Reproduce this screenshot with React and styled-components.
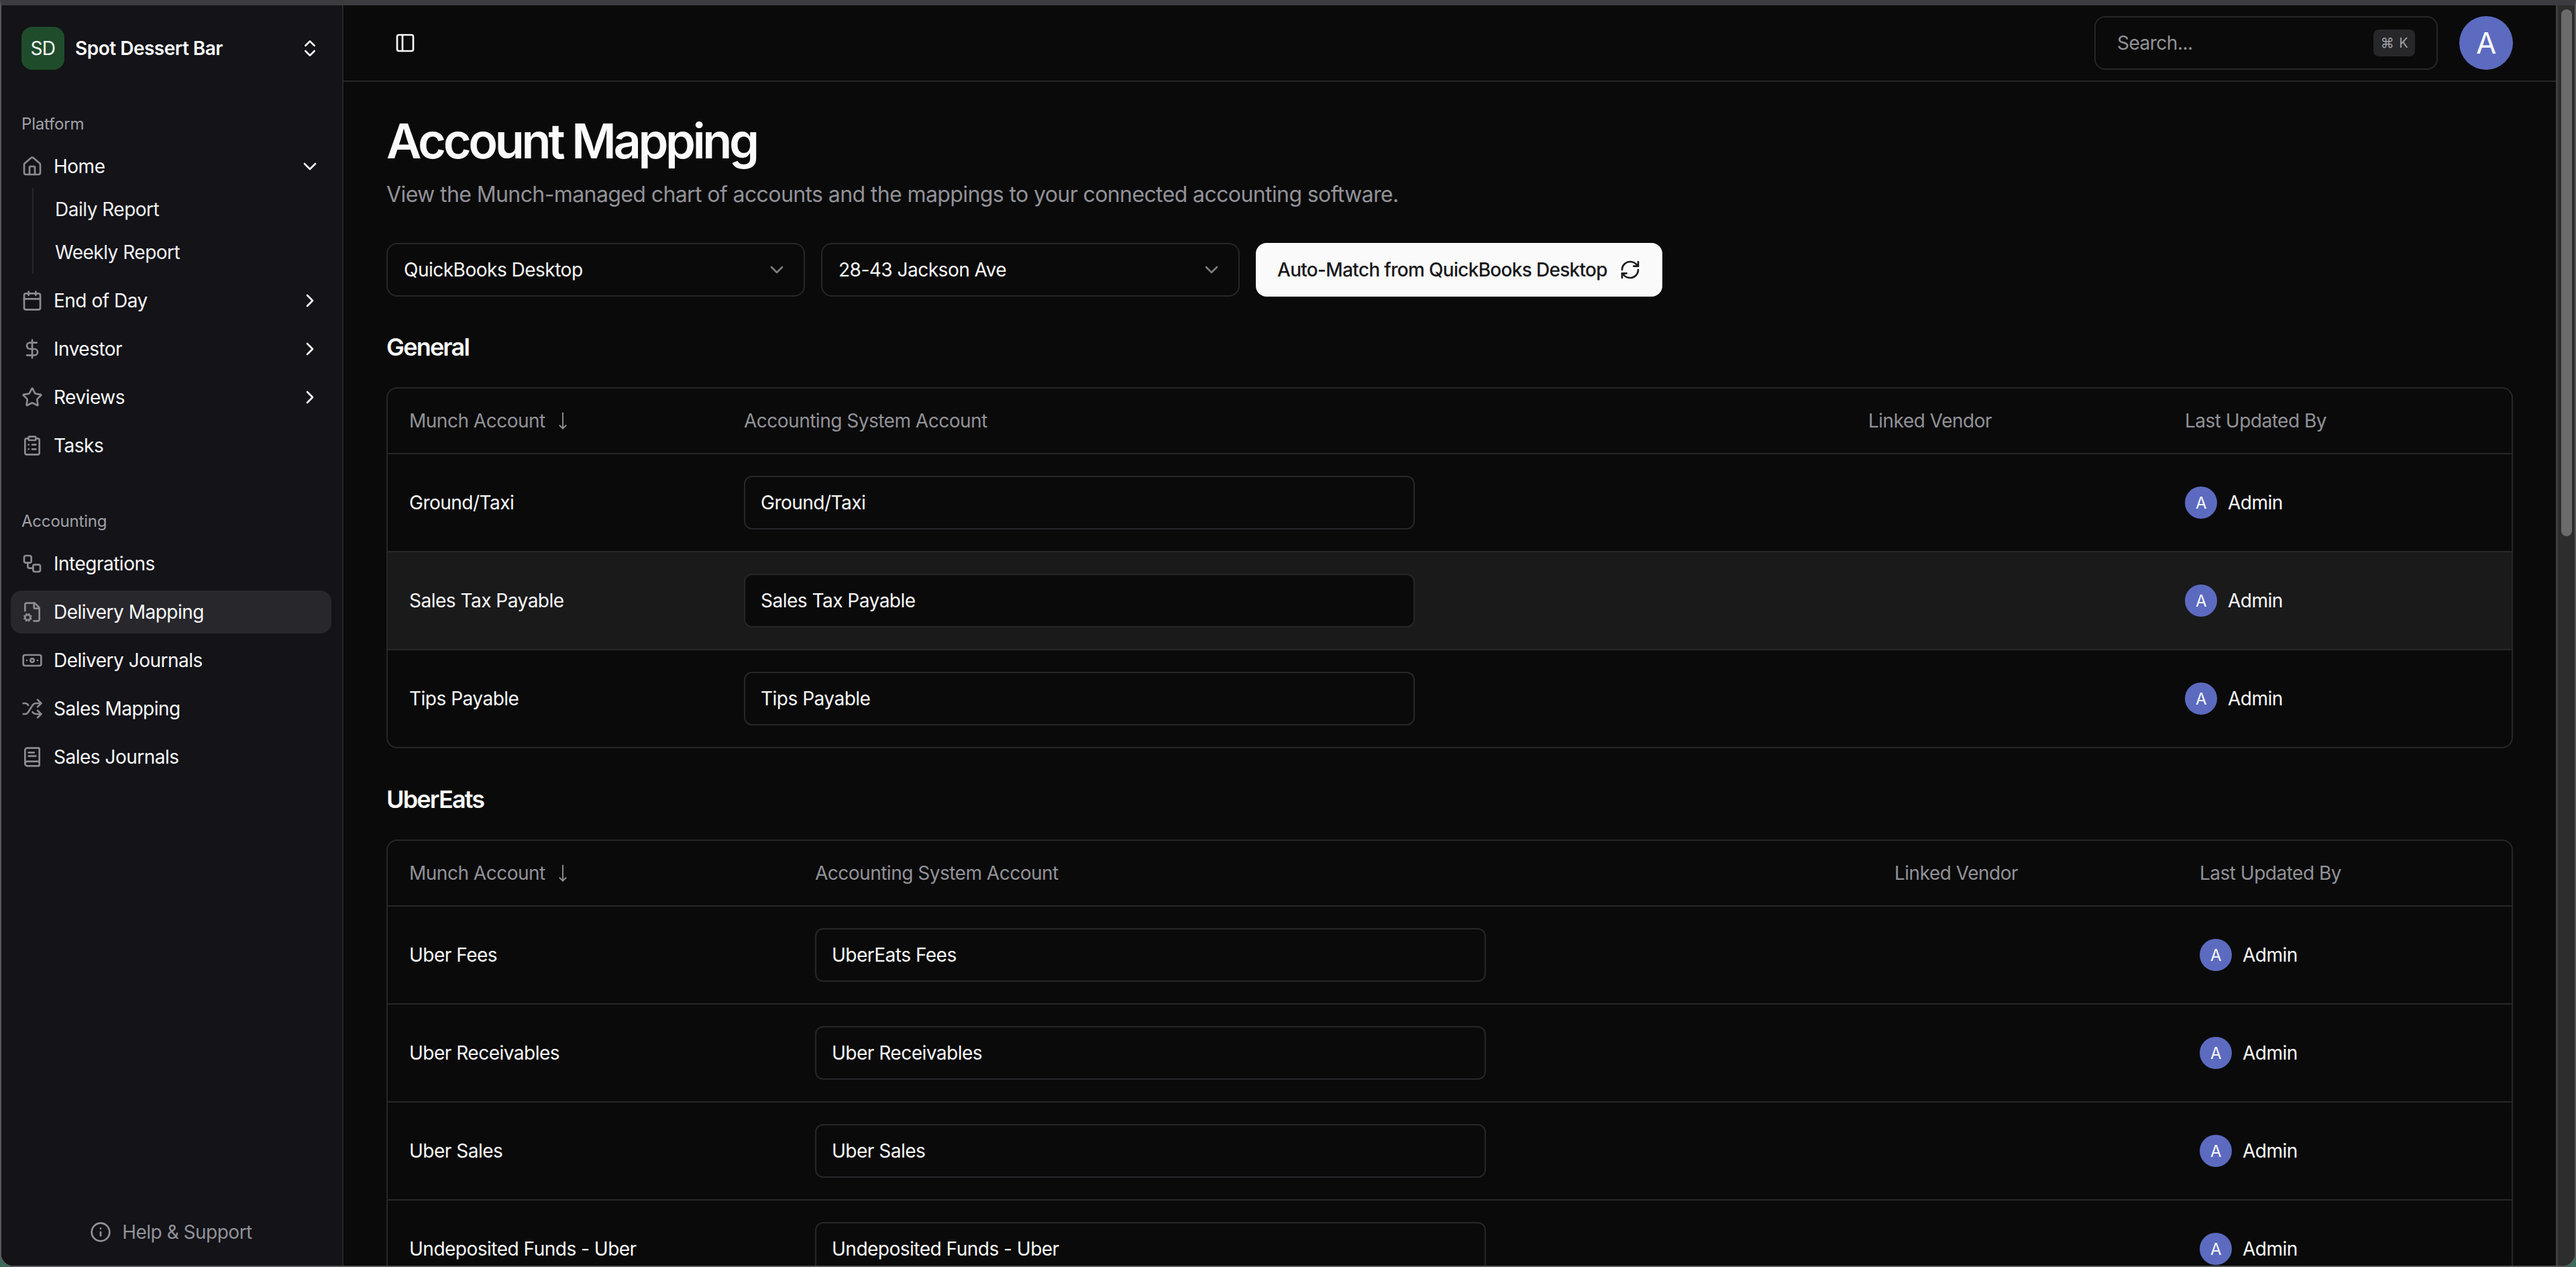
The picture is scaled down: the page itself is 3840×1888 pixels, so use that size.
import React from "react";
import styled, { createGlobalStyle } from "styled-components";
import {
  Banknote,
  BookText,
  Calendar,
  ChevronDown,
  ChevronRight,
  ChevronsUpDown,
  ClipboardList,
  DollarSign,
  FileCog,
  House,
  Info,
  MoveDown,
  PanelLeft,
  RefreshCw,
  Shuffle,
  Star,
  Workflow,
} from "lucide-react";

const GlobalStyle = createGlobalStyle`
  html, body, #root {
    margin: 0;
    height: 100%;
    overflow: hidden;
  }
  body {
    background: #3c6b5a;
    font-family: Inter, "Liberation Sans", sans-serif;
    letter-spacing: -0.5px;
    color: #fafafa;
  }
  * {
    box-sizing: border-box;
  }
`;

const AppWindow = styled.div`
  display: flex;
  height: 1888px;
  background: #0a0a0a;
  border: 2px solid #58585c;
  border-top: 8px solid #3b3b40;
  border-radius: 0 0 20px 20px;
  overflow: hidden;
`;

const Sidebar = styled.aside`
  display: flex;
  flex-direction: column;
  flex: 0 0 510px;
  background: #131318;
  border-right: 2px solid #27272a;
  padding: 0 16px 18px 14px;
`;

const Brand = styled.div`
  display: flex;
  align-items: center;
  height: 64px;
  margin: 32px 0 48px;
  padding: 0 16px;
  gap: 16px;
  font-size: 28px;
  font-weight: 600;
  white-space: nowrap;

  svg {
    margin-left: auto;
  }
`;

const BrandMark = styled.div`
  display: flex;
  align-items: center;
  justify-content: center;
  flex: 0 0 64px;
  height: 64px;
  border-radius: 16px;
  background: #1f4d2b;
  font-weight: 400;
`;

const Group = styled.nav`
  display: flex;
  flex-direction: column;
  gap: 8px;
  margin-bottom: 48px;
`;

const GroupLabel = styled.div`
  display: flex;
  align-items: center;
  height: 64px;
  margin-bottom: -8px;
  padding-left: 16px;
  font-size: 24px;
  letter-spacing: -0.2px;
  color: #a1a1a6;
`;

const NavRow = styled.div`
  display: flex;
  align-items: center;
  gap: 16px;
  height: 64px;
  padding: 0 16px;
  border-radius: 16px;
  font-size: 28px;
  white-space: nowrap;
  background: ${(props) => (props.$active ? "#27272c" : "transparent")};

  > svg:first-child {
    color: #8c8c90;
    flex: none;
  }
  > svg:last-child:not(:first-child) {
    margin-left: auto;
    flex: none;
  }
`;

const SubList = styled.div`
  display: flex;
  flex-direction: column;
  gap: 8px;
  margin-left: 32px;
  padding: 4px 0 4px 32px;
  border-left: 2px solid #27272a;
`;

const SubRow = styled.div`
  display: flex;
  align-items: center;
  height: 56px;
  font-size: 28px;
  color: #f0f0f2;
`;

const HelpLink = styled.div`
  display: flex;
  align-items: center;
  justify-content: center;
  gap: 16px;
  height: 64px;
  margin-top: auto;
  font-size: 28px;
  color: #929298;
`;

const Main = styled.main`
  flex: 1;
  min-width: 0;
  display: flex;
  flex-direction: column;
  overflow: hidden;
`;

const TopBar = styled.header`
  display: flex;
  align-items: center;
  flex: 0 0 114px;
  gap: 32px;
  padding: 0 64px;
  border-bottom: 2px solid #27272a;
`;

const IconButton = styled.div`
  display: flex;
  align-items: center;
  justify-content: center;
  width: 56px;
  height: 56px;
  margin-right: auto;
`;

const SearchBox = styled.div`
  display: flex;
  align-items: center;
  justify-content: space-between;
  width: 512px;
  height: 80px;
  padding: 0 32px;
  border: 2px solid #27272a;
  border-radius: 16px;
  font-size: 28px;
  color: #929298;
`;

const Kbd = styled.kbd`
  display: flex;
  align-items: center;
  justify-content: center;
  gap: 8px;
  width: 62px;
  height: 40px;
  border-radius: 8px;
  background: #27272a;
  font-family: Inter, "DejaVu Sans", sans-serif;
  font-size: 20px;
  color: #a1a1a6;
`;

const TopAvatar = styled.div`
  display: flex;
  align-items: center;
  justify-content: center;
  width: 80px;
  height: 80px;
  border-radius: 50%;
  background: #5c6bc0;
  font-size: 44px;
`;

const Content = styled.div`
  padding: 48px 64px;
`;

const Title = styled.h1`
  margin: 0 0 16px;
  font-size: 72px;
  line-height: 80px;
  font-weight: 600;
  letter-spacing: -4.3px;
`;

const Subtitle = styled.p`
  margin: 0 0 48px;
  font-size: 32px;
  line-height: 48px;
  letter-spacing: -0.6px;
  color: #929298;
`;

const Filters = styled.div`
  display: flex;
  gap: 24px;
  margin-bottom: 47px;
`;

const Select = styled.div`
  display: flex;
  align-items: center;
  justify-content: space-between;
  width: 624px;
  height: 80px;
  padding: 0 24px;
  border: 2px solid #27272a;
  border-radius: 16px;
  font-size: 28px;

  svg {
    color: #7d7d7d;
  }
`;

const PrimaryButton = styled.div`
  display: flex;
  align-items: center;
  gap: 18px;
  height: 80px;
  padding: 0 32px;
  border-radius: 16px;
  background: #fafafa;
  color: #18181b;
  font-size: 28px;
  font-weight: 500;
  letter-spacing: -0.7px;
  white-space: nowrap;
`;

const SectionTitle = styled.h2`
  margin: 0 0 32px;
  font-size: 36px;
  line-height: 56px;
  font-weight: 600;
  letter-spacing: -1.8px;
`;

const Section = styled.section`
  margin-bottom: 48px;
`;

const Table = styled.div`
  border: 2px solid #27272a;
  border-radius: 16px;
  overflow: hidden;
`;

const HeadRow = styled.div`
  display: grid;
  grid-template-columns: ${(props) => props.$cols};
  align-items: center;
  height: 98px;
  border-bottom: 2px solid #27272a;
  font-size: 28px;
  color: #929298;
`;

const HeadCell = styled.div`
  display: flex;
  align-items: center;
  gap: 12px;
  padding: 0 32px;
  white-space: nowrap;
`;

const BodyRow = styled.div`
  display: grid;
  grid-template-columns: ${(props) => props.$cols};
  align-items: center;
  height: 146px;
  border-bottom: 2px solid #27272a;
  font-size: 28px;
  background: ${(props) => (props.$hover ? "#1a1a1b" : "transparent")};

  &:last-child {
    border-bottom: 0;
    height: 144px;
  }
`;

const Cell = styled.div`
  display: flex;
  align-items: center;
  padding: 0 32px;
  white-space: nowrap;
`;

const Field = styled.div`
  display: flex;
  align-items: center;
  flex: 0 0 1000px;
  height: 80px;
  padding: 0 23px;
  border: 2px solid #27272a;
  border-radius: 12px;
  background: #0a0a0a;
`;

const UserChip = styled.div`
  display: flex;
  align-items: center;
  gap: 16px;
`;

const UserAvatar = styled.div`
  display: flex;
  align-items: center;
  justify-content: center;
  width: 48px;
  height: 48px;
  border-radius: 50%;
  background: #5c6bc0;
  font-size: 24px;
`;

const ScrollTrack = styled.div`
  flex: 0 0 28px;
  background: #2d2d2d;
  border-left: 3px solid #404040;
  padding: 6px 0 0 5px;
`;

const ScrollThumb = styled.div`
  width: 16px;
  height: 785px;
  border-radius: 8px;
  background: #6b6b6b;
`;

const generalCols = "499px 1676px 472px 1fr";
const uberCols = "605px 1609px 455px 1fr";

const sections = [
  {
    title: "General",
    cols: generalCols,
    rows: [
      ["Ground/Taxi", "Ground/Taxi"],
      ["Sales Tax Payable", "Sales Tax Payable", true],
      ["Tips Payable", "Tips Payable"],
    ],
  },
  {
    title: "UberEats",
    cols: uberCols,
    rows: [
      ["Uber Fees", "UberEats Fees"],
      ["Uber Receivables", "Uber Receivables"],
      ["Uber Sales", "Uber Sales"],
      ["Undeposited Funds - Uber", "Undeposited Funds - Uber"],
    ],
  },
];

function MappingTable({ title, cols, rows }) {
  return (
    <Section>
      <SectionTitle>{title}</SectionTitle>
      <Table>
        <HeadRow $cols={cols}>
          <HeadCell>
            Munch Account
            <MoveDown size={28} strokeWidth={1.6} />
          </HeadCell>
          <HeadCell>Accounting System Account</HeadCell>
          <HeadCell>Linked Vendor</HeadCell>
          <HeadCell>Last Updated By</HeadCell>
        </HeadRow>
        {rows.map(([name, mapped, hover]) => (
          <BodyRow key={name} $cols={cols} $hover={hover}>
            <Cell>{name}</Cell>
            <Cell>
              <Field>{mapped}</Field>
            </Cell>
            <Cell />
            <Cell>
              <UserChip>
                <UserAvatar>A</UserAvatar>
                Admin
              </UserChip>
            </Cell>
          </BodyRow>
        ))}
      </Table>
    </Section>
  );
}

export default function App() {
  return (
    <>
      <GlobalStyle />
      <AppWindow>
        <Sidebar>
          <Brand>
            <BrandMark>SD</BrandMark>
            Spot Dessert Bar
            <ChevronsUpDown size={32} />
          </Brand>

          <Group>
            <GroupLabel>Platform</GroupLabel>
            <div>
              <NavRow>
                <House size={32} />
                Home
                <ChevronDown size={32} />
              </NavRow>
              <SubList>
                <SubRow>Daily Report</SubRow>
                <SubRow>Weekly Report</SubRow>
              </SubList>
            </div>
            <NavRow>
              <Calendar size={32} />
              End of Day
              <ChevronRight size={32} />
            </NavRow>
            <NavRow>
              <DollarSign size={32} />
              Investor
              <ChevronRight size={32} />
            </NavRow>
            <NavRow>
              <Star size={32} />
              Reviews
              <ChevronRight size={32} />
            </NavRow>
            <NavRow>
              <ClipboardList size={32} />
              Tasks
            </NavRow>
          </Group>

          <Group>
            <GroupLabel>Accounting</GroupLabel>
            <NavRow>
              <Workflow size={32} />
              Integrations
            </NavRow>
            <NavRow $active>
              <FileCog size={32} />
              Delivery Mapping
            </NavRow>
            <NavRow>
              <Banknote size={32} />
              Delivery Journals
            </NavRow>
            <NavRow>
              <Shuffle size={32} />
              Sales Mapping
            </NavRow>
            <NavRow>
              <BookText size={32} />
              Sales Journals
            </NavRow>
          </Group>

          <HelpLink>
            <Info size={32} />
            Help &amp; Support
          </HelpLink>
        </Sidebar>

        <Main>
          <TopBar>
            <IconButton>
              <PanelLeft size={32} />
            </IconButton>
            <SearchBox>
              Search...
              <Kbd>
                <span>⌘</span>
                <span>K</span>
              </Kbd>
            </SearchBox>
            <TopAvatar>A</TopAvatar>
          </TopBar>

          <Content>
            <Title>Account Mapping</Title>
            <Subtitle>
              View the Munch-managed chart of accounts and the mappings to your
              connected accounting software.
            </Subtitle>
            <Filters>
              <Select>
                QuickBooks Desktop
                <ChevronDown size={32} />
              </Select>
              <Select>
                28-43 Jackson Ave
                <ChevronDown size={32} />
              </Select>
              <PrimaryButton>
                Auto-Match from QuickBooks Desktop
                <RefreshCw size={32} />
              </PrimaryButton>
            </Filters>
            {sections.map((section) => (
              <MappingTable key={section.title} {...section} />
            ))}
          </Content>
        </Main>

        <ScrollTrack>
          <ScrollThumb />
        </ScrollTrack>
      </AppWindow>
    </>
  );
}
